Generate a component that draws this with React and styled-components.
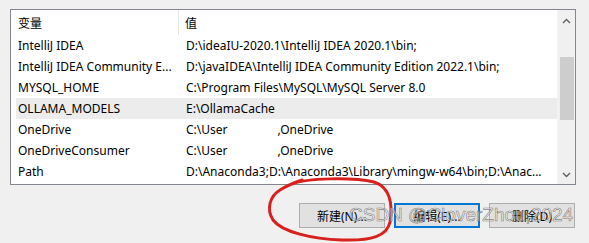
import React from "react";
import styled, { createGlobalStyle } from "styled-components";

const GlobalStyle = createGlobalStyle`
  html, body {
    margin: 0;
    padding: 0;
    background: #f0f0f0;
  }
  body {
    font-family: "Segoe UI", "Noto Sans", "Noto Sans CJK SC", sans-serif;
    font-size: 12px;
    color: #000;
  }
`;

const Dialog = styled.div`
  position: relative;
  width: 589px;
  height: 243px;
  overflow: hidden;
  box-sizing: border-box;
  padding: 9px 13px 0 10px;
`;

const ListBox = styled.div`
  display: flex;
  height: 176px;
  box-sizing: border-box;
  border: 1px solid #828790;
  background: #fff;
`;

const ListBody = styled.div`
  flex: 1;
  display: flex;
  flex-direction: column;
  overflow: hidden;
`;

const HeaderRow = styled.div`
  display: grid;
  grid-template-columns: 168px 1fr;
  height: 25px;
  align-items: center;
`;

const HeaderCell = styled.div`
  height: 100%;
  display: flex;
  align-items: center;
  padding-left: ${(p) => p.$pad}px;
  border-right: ${(p) => (p.$divider ? "1px solid #e5e5e5" : "none")};
  box-sizing: border-box;
`;

const Row = styled.div`
  display: grid;
  grid-template-columns: 168px 1fr;
  height: 21px;
  align-items: center;
  margin-left: 5px;
  padding-left: 2px;
  background: ${(p) => (p.$selected ? "#ececec" : "transparent")};
  white-space: nowrap;
`;

const Cell = styled.div`
  overflow: hidden;
  white-space: nowrap;
`;

const Redacted = styled.span`
  display: inline-block;
  width: ${(p) => p.$w}px;
`;

const ScrollBar = styled.div`
  width: 17px;
  display: flex;
  flex-direction: column;
  align-items: center;
  background: #f0f0f0;
  border-left: 1px solid #f4f4f4;
`;

const Arrow = styled.div`
  height: 17px;
  width: 17px;
  display: flex;
  align-items: center;
  justify-content: center;
  margin-top: ${(p) => p.$top || 0}px;
`;

const Thumb = styled.div`
  width: 14px;
  height: 63px;
  background: #cdcdcd;
  margin-top: 28px;
`;

const ButtonBar = styled.div`
  display: flex;
  justify-content: flex-end;
  gap: 9px;
  margin-top: 18px;
  padding-right: 1px;
`;

const Button = styled.button`
  width: 86px;
  height: 25px;
  box-sizing: border-box;
  font-family: "Segoe UI", "Noto Sans", "Noto Sans CJK SC", sans-serif;
  font-size: 12px;
  color: #000;
  background: #e1e1e1;
  border: ${(p) => (p.$focused ? "2px solid #0078d7" : "1px solid #adadad")};
  padding: 0;
`;

const Circle = styled.svg`
  position: absolute;
  left: 262px;
  top: 174px;
  pointer-events: none;
`;

const Watermark = styled.div`
  position: absolute;
  left: 349px;
  top: 204px;
  font-family: "Liberation Sans", Arial, sans-serif;
  font-size: 19px;
  color: rgba(255, 255, 255, 0.55);
  -webkit-text-stroke: 0.6px rgba(100, 100, 100, 0.8);
  white-space: nowrap;
  pointer-events: none;
`;

const Chevron = ({ up }) => (
  <svg width="9" height="6" viewBox="0 0 9 6">
    <path
      d={up ? "M1 5 L4.5 1.5 L8 5" : "M1 1 L4.5 4.5 L8 1"}
      fill="none"
      stroke="#606060"
      strokeWidth="1.4"
    />
  </svg>
);

const rows = [
  ["IntelliJ IDEA", "D:\\ideaIU-2020.1\\IntelliJ IDEA 2020.1\\bin;"],
  ["IntelliJ IDEA Community E...", "D:\\javaIDEA\\IntelliJ IDEA Community Edition 2022.1\\bin;"],
  ["MYSQL_HOME", "C:\\Program Files\\MySQL\\MySQL Server 8.0"],
  ["OLLAMA_MODELS", "E:\\OllamaCache", true],
  ["OneDrive", "redacted"],
  ["OneDriveConsumer", "redacted"],
  ["Path", "D:\\Anaconda3;D:\\Anaconda3\\Library\\mingw-w64\\bin;D:\\Anac..."],
];

export default function App() {
  return (
    <>
      <GlobalStyle />
      <Dialog>
        <ListBox>
          <ListBody>
            <HeaderRow>
              <HeaderCell $pad={7} $divider>变量</HeaderCell>
              <HeaderCell $pad={6}>值</HeaderCell>
            </HeaderRow>
            {rows.map(([name, value, selected]) => (
              <Row key={name} $selected={selected}>
                <Cell>{name}</Cell>
                <Cell>
                  {value === "redacted" ? (
                    <>
                      C:\User<Redacted $w={50} />,OneDrive
                    </>
                  ) : (
                    value
                  )}
                </Cell>
              </Row>
            ))}
          </ListBody>
          <ScrollBar>
            <Arrow $top={2}>
              <Chevron up />
            </Arrow>
            <Thumb />
            <Arrow $top={46}>
              <Chevron />
            </Arrow>
          </ScrollBar>
        </ListBox>
        <ButtonBar>
          <Button>新建(N)...</Button>
          <Button $focused>编辑(E)...</Button>
          <Button>删除(D)</Button>
        </ButtonBar>
        <Circle width="140" height="69" viewBox="0 0 140 69">
          <path
            d="M30 10 C 45 4, 90 3, 112 8 C 128 13, 131 30, 128 48 C 125 62, 110 67, 80 66 C 50 65, 20 58, 11 46 C 4 35, 8 22, 18 16 C 26 11, 34 8, 40 6"
            fill="none"
            stroke="#d8201c"
            strokeWidth="3"
            strokeLinecap="round"
          />
        </Circle>
        <Watermark>CSDN @CloverZhou,2024</Watermark>
      </Dialog>
    </>
  );
}
